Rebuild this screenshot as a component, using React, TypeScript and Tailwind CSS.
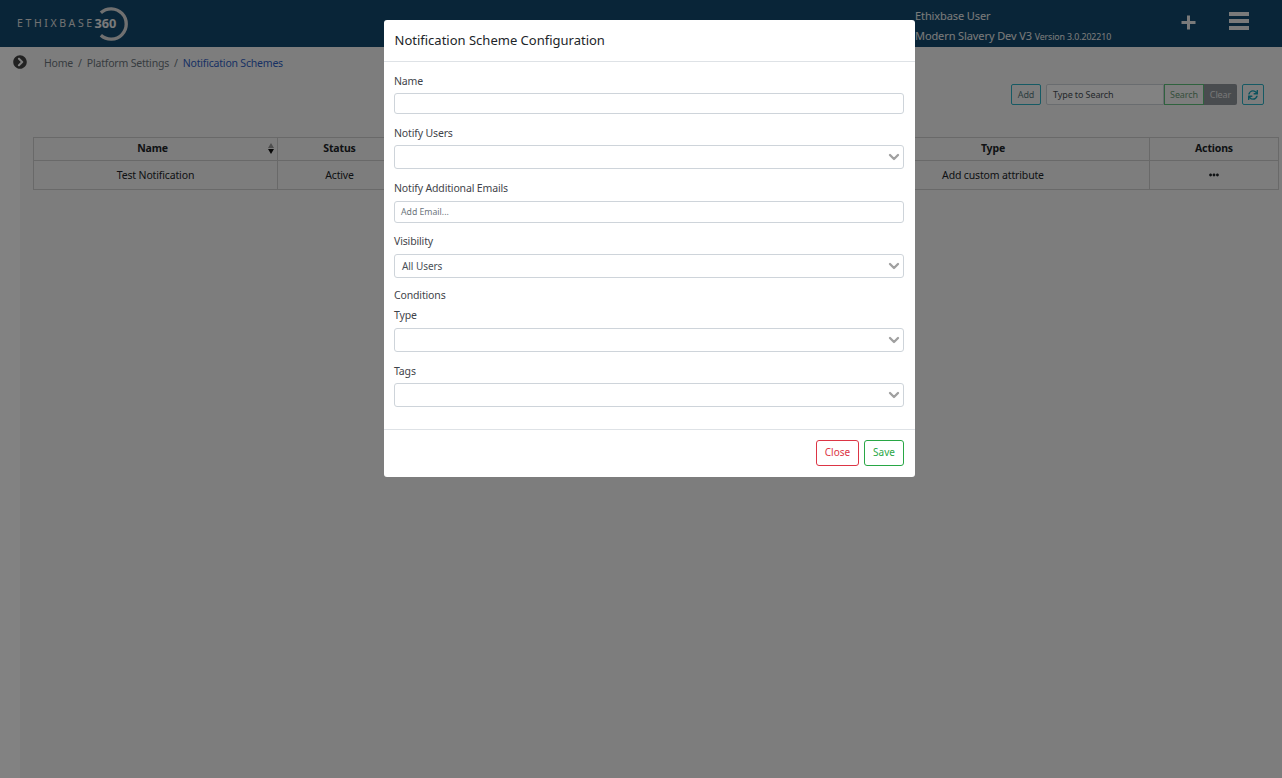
import React from 'react';
import { ChevronDown } from 'lucide-react';
import { FaChevronCircleRight, FaEllipsisH, FaSync } from 'react-icons/fa';

const Logo = () => (
  <div className="flex items-center ml-[17px] w-[112px] shrink-0">
    <span className="w-[78px] text-[10.5px] tracking-[2.6px] text-[#e0e0e0] whitespace-nowrap">ETHIXBASE</span>
    <svg width="36" height="36" viewBox="0 0 36 36" className="-ml-[1px]">
      <path d="M7 6.500 A15.500 15.500 0 1 1 7 29.500" fill="none" stroke="#dcdcdc" strokeWidth="3.400" />
      <text x="0.500" y="22.500" fontSize="13" fontWeight="700" fill="#f0f0f0" fontFamily="'Noto Sans', sans-serif">360</text>
    </svg>
  </div>
);

const Header = () => (
  <header className="h-[47px] bg-[#134a6e] flex items-center shrink-0">
    <Logo />
    <div className="ml-[786px] w-[260px] text-[#f0f0f0] text-[11px] tracking-[-0.1px] mt-[6px]">
      <div className="leading-[20px]">Ethixbase User</div>
      <div className="leading-[20px] whitespace-nowrap">
        Modern Slavery Dev V3 <span className="text-[8.800px]">Version 3.0.202210</span>
      </div>
    </div>
    <svg width="15" height="15" viewBox="0 0 15 15" className="ml-[6px] -mt-[3px]">
      <path d="M6 0.500h3v5.500h5.500v3h-5.500v5.500h-3v-5.500h-5.500v-3h5.500z" fill="#f0f0f0" />
    </svg>
    <div className="ml-[33px] -mt-[5px] w-[20px] flex flex-col gap-[3px]">
      <div className="h-[4px] bg-[#f0f0f0]" />
      <div className="h-[4px] bg-[#f0f0f0]" />
      <div className="h-[4px] bg-[#f0f0f0]" />
    </div>
  </header>
);

const Toolbar = () => (
  <div className="flex justify-end items-center mt-[13px] pr-[18px] text-[9px] tracking-[-0.1px]">
    <button className="h-[21px] w-[30px] border border-[#2bb0c4] rounded-[2px] text-[#5a7a80]">Add</button>
    <div className="ml-[5px] h-[21px] w-[118px] border border-[#ced4da] rounded-l-[2px] pl-[6px] leading-[19px] text-[#495057] bg-white">Type to Search</div>
    <button className="h-[21px] w-[40px] border border-[#5cc07a] text-[#6a9a76]">Search</button>
    <button className="h-[21px] w-[33px] bg-[#8f959b] rounded-r-[2px] text-[#e8e8e8]">Clear</button>
    <button className="ml-[5px] h-[21px] w-[22px] border border-[#2bb0c4] rounded-[2px] flex items-center justify-center">
      <FaSync size={10} color="#17a2b8" />
    </button>
  </div>
);

const Table = () => (
  <table className="mt-[32px] w-[1246px] table-fixed border-collapse text-[10.5px] tracking-[-0.15px] text-[#212529]">
    <colgroup>
      <col className="w-[244px]" />
      <col className="w-[124px]" />
      <col />
      <col className="w-[313px]" />
      <col className="w-[129px]" />
    </colgroup>
    <thead>
      <tr className="h-[23px]">
        <th className="border border-[#cfcfcf] font-bold relative pr-[6px]">
          Name
          <span className="absolute right-[3px] top-[5px] flex flex-col gap-[1px]">
            <span className="w-0 h-0 border-x-[3.500px] border-x-transparent border-b-[5px] border-b-[#999999]" />
            <span className="w-0 h-0 border-x-[3.500px] border-x-transparent border-t-[5px] border-t-[#111111]" />
          </span>
        </th>
        <th className="border border-[#cfcfcf] font-bold">Status</th>
        <th className="border border-[#cfcfcf] font-bold" />
        <th className="border border-[#cfcfcf] font-bold">Type</th>
        <th className="border border-[#cfcfcf] font-bold">Actions</th>
      </tr>
    </thead>
    <tbody>
      <tr className="h-[29px] text-center">
        <td className="border border-[#cfcfcf] pt-[1px]">Test Notification</td>
        <td className="border border-[#cfcfcf] pt-[1px]">Active</td>
        <td className="border border-[#cfcfcf]" />
        <td className="border border-[#cfcfcf] pt-[1px]">Add custom attribute</td>
        <td className="border border-[#cfcfcf]">
          <FaEllipsisH size={10} className="mx-auto" />
        </td>
      </tr>
    </tbody>
  </table>
);

const Field = ({ label, className, children }: { label: string; className: string; children: React.ReactNode }) => (
  <div className={className}>
    <div className="text-[10.5px] tracking-[-0.15px] leading-[16px] text-[#3f444a]">{label}</div>
    {children}
  </div>
);

const Select = ({ value }: { value?: string }) => (
  <div className="mt-[4px] h-[24px] border border-[#ced4da] rounded-[3px] flex items-center justify-between pl-[7px] pr-[1px] text-[10px] tracking-[-0.05px] text-[#495057]">
    <span>{value}</span>
    <ChevronDown className="w-[16px] h-[16px] text-[#a0a0a0]" strokeWidth={3.5} />
  </div>
);

const Modal = () => (
  <div className="absolute top-[20px] left-[384px] w-[531px] h-[457px] bg-white rounded-[3px] flex flex-col">
    <div className="h-[42px] border-b border-[#dee2e6] pl-[10.500px] pr-[10px] flex items-center text-[13px] text-[#212529]">
      Notification Scheme Configuration
    </div>
    <div className="pl-[10px] pr-[11px] flex-1">
      <Field label="Name" className="mt-[11px]">
        <div className="mt-[4px] h-[21px] border border-[#ced4da] rounded-[3px]" />
      </Field>
      <Field label="Notify Users" className="mt-[11px]">
        <Select />
      </Field>
      <Field label="Notify Additional Emails" className="mt-[11px]">
        <div className="mt-[5px] h-[22px] border border-[#ced4da] rounded-[3px] pl-[6px] text-[8.700px] leading-[20px] text-[#6c757d]">Add Email...</div>
      </Field>
      <Field label="Visibility" className="mt-[10px]">
        <div className="h-[1px]" />
        <Select value="All Users" />
      </Field>
      <Field label="Conditions" className="mt-[9px]">
        <div className="mt-[4px] text-[10.5px] tracking-[-0.15px] leading-[16px] text-[#3f444a]">Type</div>
        <div className="h-[1px]" />
        <Select />
      </Field>
      <Field label="Tags" className="mt-[11px]">
        <Select />
      </Field>
    </div>
    <div className="h-[48px] border-t border-[#dee2e6] pb-[2px] px-[11px] flex items-center justify-end gap-[5px] text-[10px]">
      <button className="h-[26px] w-[43px] border border-[#dc3545] rounded-[3px] text-[#dc3545]">Close</button>
      <button className="h-[26px] w-[40px] border border-[#28a745] rounded-[3px] text-[#28a745]">Save</button>
    </div>
  </div>
);

export default function App() {
  return (
    <div className="relative h-[778px] w-[1282px] overflow-hidden bg-white font-['Noto_Sans',sans-serif]">
      <Header />
      <div className="flex h-[731px]">
        <div className="w-[20px] bg-white shrink-0 relative">
          <FaChevronCircleRight size={14} color="#444444" className="absolute left-[13px] top-[8px]" />
        </div>
        <main className="flex-1 pl-[13px] bg-[#f6f6f6]">
          <nav className="ml-[11px] pt-[8px] text-[10.5px] tracking-[-0.2px] leading-[16px] text-[#6c757d]">
            Home <span className="mx-[2.500px]">/</span> Platform Settings <span className="mx-[2.500px]">/</span> <span className="text-[#2f5fc4]">Notification Schemes</span>
          </nav>
          <Toolbar />
          <Table />
        </main>
      </div>
      <div className="absolute inset-0 bg-black/49" />
      <Modal />
    </div>
  );
}
